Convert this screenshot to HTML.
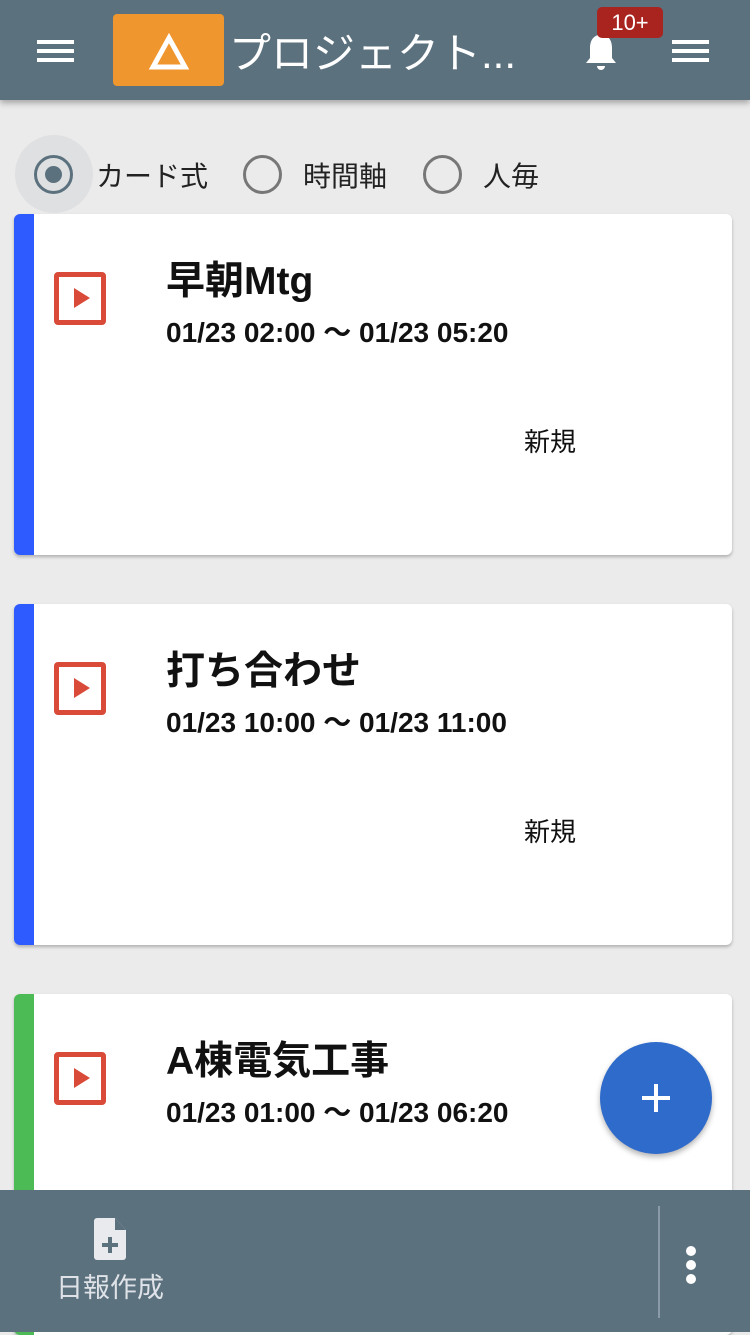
<!DOCTYPE html><html><head><meta charset="utf-8"><style>
body{margin:0;width:750px;height:1332px;background:#ebebeb;font-family:"Liberation Sans","Noto Sans CJK JP",sans-serif;position:relative;overflow:hidden}
.hdr{position:absolute;left:0;top:0;width:750px;height:100px;background:#5b717e;box-shadow:0 3px 6px rgba(0,0,0,.3);z-index:2}
.bar{position:absolute;height:4px;background:#fff;width:37px}
.card{position:absolute;left:14px;width:718px;height:341px;background:#fff;border-radius:6px;box-shadow:0 2px 3px rgba(0,0,0,.25);overflow:hidden}
.card .s{position:absolute;left:0;top:0;bottom:0;width:20px}
.ic{position:absolute;left:40px;top:58px;width:42px;height:43px;border:5px solid #d94a38;border-radius:4px}
.ic:after{content:"";position:absolute;left:15px;top:11px;border-left:16px solid #d94a38;border-top:10px solid transparent;border-bottom:10px solid transparent}
.t{position:absolute;left:152px;top:36px;font-size:39px;font-weight:bold;color:#111}
.d{position:absolute;left:152px;top:97px;font-size:28px;font-weight:bold;color:#111}
.n{position:absolute;left:510px;top:208px;font-size:26px;color:#111}
.radio{position:absolute;top:155px;width:39px;height:39px;border:3px solid #777;border-radius:50%;box-sizing:border-box}
.lbl{position:absolute;top:155px;font-size:28px;color:#222}
</style></head><body>
<div class="hdr">
<div class="bar" style="left:37px;top:40px"></div><div class="bar" style="left:37px;top:49px"></div><div class="bar" style="left:37px;top:58px"></div>
<div style="position:absolute;left:113px;top:14px;width:111px;height:72px;background:#f0962e;border-radius:4px"><svg width="111" height="72"><polygon points="56,24 40,53 72,53" fill="none" stroke="#fff" stroke-width="5"/></svg></div>
<div style="position:absolute;left:229px;top:20px;font-size:42px;color:#fff;white-space:nowrap">プロジェクト...</div>
<svg style="position:absolute;left:582px;top:30px" width="38" height="44" viewBox="0 0 38 44"><path d="M19 2c-2 0-3 1-3 3 -6 2-8 7-8 13v10l-4 5h30l-4-5V18c0-6-2-11-8-13 0-2-1-3-3-3z M15 36a4 4 0 0 0 8 0z" fill="#fff"/></svg>
<div style="position:absolute;left:597px;top:7px;width:66px;height:31px;background:#a9231f;border-radius:5px;color:#fff;font-size:22px;text-align:center;line-height:31px">10+</div>
<div class="bar" style="left:672px;top:40px"></div><div class="bar" style="left:672px;top:49px"></div><div class="bar" style="left:672px;top:58px"></div>
</div>
<div style="position:absolute;left:15px;top:135px;width:78px;height:78px;border-radius:50%;background:#dfe0e2"></div>
<div class="radio" style="left:34px;border-color:#5b717e"><div style="position:absolute;left:8px;top:8px;width:17px;height:17px;border-radius:50%;background:#5b717e"></div></div>
<div class="lbl" style="left:96px">カード式</div>
<div class="radio" style="left:243px"></div><div class="lbl" style="left:303px">時間軸</div>
<div class="radio" style="left:423px"></div><div class="lbl" style="left:483px">人毎</div>
<div class="card" style="top:214px"><div class="s" style="background:#2e5bff"></div><div class="ic"></div><div class="t">早朝Mtg</div><div class="d">01/23 02:00 〜 01/23 05:20</div><div class="n">新規</div></div>
<div class="card" style="top:604px"><div class="s" style="background:#2e5bff"></div><div class="ic"></div><div class="t">打ち合わせ</div><div class="d">01/23 10:00 〜 01/23 11:00</div><div class="n">新規</div></div>
<div class="card" style="top:994px"><div class="s" style="background:#4cbb55"></div><div class="ic"></div><div class="t">A棟電気工事</div><div class="d">01/23 01:00 〜 01/23 06:20</div></div>
<div style="position:absolute;left:600px;top:1042px;width:112px;height:112px;border-radius:50%;background:#2f6bcb;box-shadow:0 3px 6px rgba(0,0,0,.3);z-index:3"><div style="position:absolute;left:42px;top:54px;width:28px;height:4px;background:#fff"></div><div style="position:absolute;left:54px;top:42px;width:4px;height:28px;background:#fff"></div></div>
<div style="position:absolute;left:0;top:1190px;width:750px;height:142px;background:#5b717e">
<svg style="position:absolute;left:94px;top:28px" width="32" height="42" viewBox="0 0 32 42"><path d="M3 0h18l11 12v27a3 3 0 0 1-3 3H3a3 3 0 0 1-3-3V3a3 3 0 0 1 3-3z" fill="#e8eaee"/><path d="M21 0v12h11z" fill="#5b717e"/><rect x="14" y="19" width="4" height="16" fill="#5b717e"/><rect x="8" y="25" width="16" height="4" fill="#5b717e"/></svg>
<div style="position:absolute;left:56px;top:76px;font-size:27px;color:#dfe3e8">日報作成</div>
<div style="position:absolute;left:658px;top:16px;width:2px;height:112px;background:#8a9aa6"></div>
<div style="position:absolute;left:686px;top:56px;width:10px;height:10px;border-radius:50%;background:#fff"></div>
<div style="position:absolute;left:686px;top:70px;width:10px;height:10px;border-radius:50%;background:#fff"></div>
<div style="position:absolute;left:686px;top:84px;width:10px;height:10px;border-radius:50%;background:#fff"></div>
</div>
</body></html>
